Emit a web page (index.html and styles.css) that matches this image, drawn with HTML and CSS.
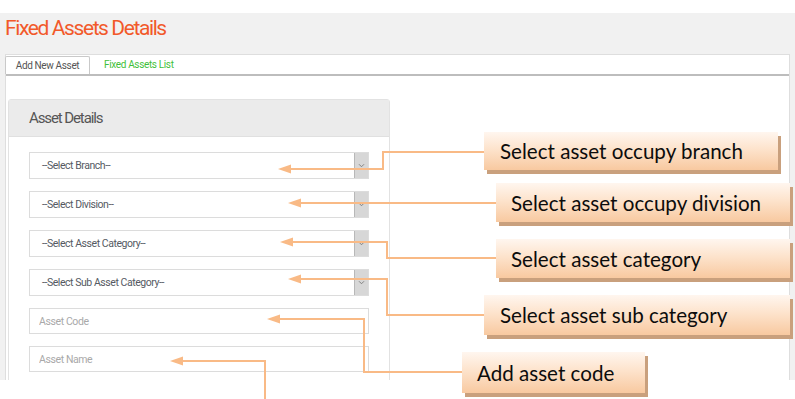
FILE: index.html
```html
<!DOCTYPE html>
<html lang="en">
<head>
<meta charset="utf-8">
<title>Fixed Assets Details</title>
<link rel="stylesheet" href="styles.css">
</head>
<body>
<div class="app">
  <div class="head"><h1 class="title">Fixed Assets Details</h1></div>
  <div class="card">
    <div class="tabs">
      <div class="tab active">Add New Asset</div>
      <div class="tab link">Fixed Assets List</div>
    </div>
    <div class="content">
      <div class="panel">
        <div class="panel-head">Asset Details</div>
        <div class="panel-body">
          <div class="select"><span class="sel-text">--Select Branch--</span><span class="sel-btn"><svg viewBox="0 0 8 6" width="7" height="5"><path d="M1 1.5 L4 4.5 L7 1.5" fill="none" stroke="#7a7a7a" stroke-width="1.1"/></svg></span></div>
          <div class="select"><span class="sel-text">--Select Division--</span><span class="sel-btn"><svg viewBox="0 0 8 6" width="7" height="5"><path d="M1 1.5 L4 4.5 L7 1.5" fill="none" stroke="#7a7a7a" stroke-width="1.1"/></svg></span></div>
          <div class="select"><span class="sel-text">--Select Asset Category--</span><span class="sel-btn"><svg viewBox="0 0 8 6" width="7" height="5"><path d="M1 1.5 L4 4.5 L7 1.5" fill="none" stroke="#7a7a7a" stroke-width="1.1"/></svg></span></div>
          <div class="select"><span class="sel-text">--Select Sub Asset Category--</span><span class="sel-btn"><svg viewBox="0 0 8 6" width="7" height="5"><path d="M1 1.5 L4 4.5 L7 1.5" fill="none" stroke="#7a7a7a" stroke-width="1.1"/></svg></span></div>
          <input class="field" type="text" placeholder="Asset Code">
          <input class="field" type="text" placeholder="Asset Name">
        </div>
      </div>
    </div>
  </div>
</div>

<div class="notes">
  <svg class="lines" width="795" height="399" viewBox="0 0 795 399">
    <g fill="none" stroke="#f9ba86" stroke-width="2">
      <polyline points="484,152 383,152 383,169 288,169"/>
      <polyline points="496,203 298,203"/>
      <polyline points="496,258 387,258 387,242 290,242"/>
      <polyline points="484,315 387,315 387,279 298,279"/>
      <polyline points="462,372 364,372 364,319 277,319"/>
      <polyline points="265,399 265,361 180,361"/>
    </g>
    <g fill="#f9ba86">
      <polygon points="278,169 291,164.5 291,173.5"/>
      <polygon points="288,203 301,198.5 301,207.5"/>
      <polygon points="280,242 293,237.5 293,246.5"/>
      <polygon points="288,279 301,274.5 301,283.5"/>
      <polygon points="267,319 280,314.5 280,323.5"/>
      <polygon points="170,361 183,356.5 183,365.5"/>
    </g>
  </svg>
  <div class="callout c1">Select asset occupy branch</div>
  <div class="callout c2">Select asset occupy division</div>
  <div class="callout c3">Select asset category</div>
  <div class="callout c4">Select asset sub category</div>
  <div class="callout c5">Add asset code</div>
</div>
</body>
</html>
```

FILE: styles.css
```css
* { box-sizing: border-box; }
html, body { margin: 0; padding: 0; }
body {
  width: 795px;
  height: 399px;
  overflow: hidden;
  background: #ffffff;
  font-family: Roboto, "Liberation Sans", sans-serif;
  position: relative;
}
.app {
  margin-top: 13px;
  height: 367px;
  background: #f1f1f1;
  overflow: hidden;
  display: flex;
  flex-direction: column;
}
.head {
  flex: none;
  height: 41px;
  padding-left: 5px;
}
.title {
  margin: 0;
  font-weight: 400;
  font-size: 21px;
  line-height: 30px;
  letter-spacing: -1.4px;
  color: #f2592a;
}
.card {
  flex: 1;
  min-height: 0;
  margin: 0 5px;
  background: #ffffff;
  border: 1px solid #dedede;
  border-bottom: none;
  display: flex;
  flex-direction: column;
}
.tabs {
  flex: none;
  height: 19px;
  display: flex;
  align-items: flex-end;
  border-bottom: 2px solid #bdbdbd;
  box-sizing: content-box;
}
.tab {
  font-size: 10px;
  letter-spacing: -0.35px;
  height: 18px;
  line-height: 17px;
}
.tab.active {
  width: 85px;
  margin-left: -1px;
  text-align: center;
  border: 1px solid #c9c9c9;
  border-bottom: none;
  border-radius: 2px 2px 0 0;
  color: #555555;
  background: #ffffff;
}
.tab.link {
  margin-left: 14px;
  color: #3fbf3a;
}
.content {
  flex: none;
  padding: 23px 0 0 2px;
}
.panel {
  width: 382px;
  border: 1px solid #e2e2e2;
  border-radius: 3px 3px 0 0;
  background: #ffffff;
}
.panel-head {
  height: 37px;
  background: #ebebeb;
  border-bottom: 1px solid #e0e0e0;
  padding-left: 20px;
  font-size: 15px;
  letter-spacing: -1.1px;
  line-height: 36px;
  color: #555555;
}
.panel-body {
  padding: 15px 20px 20px 20px;
  display: flex;
  flex-direction: column;
  gap: 12px;
}
.select {
  height: 27px;
  border: 1px solid #dcdcdc;
  display: flex;
  align-items: stretch;
  background: #ffffff;
}
.sel-text {
  flex: 1;
  padding-left: 12px;
  font-size: 10.5px;
  letter-spacing: -0.45px;
  line-height: 25px;
  color: #555a63;
}
.sel-btn {
  width: 14px;
  background: #d7d7d7;
  border-left: 1px solid #b8b8b8;
  display: flex;
  align-items: center;
  justify-content: center;
}
.field {
  height: 26px;
  border: 1px solid #dcdcdc;
  padding: 0 0 0 9px;
  margin: 0;
  font-family: Roboto, "Liberation Sans", sans-serif;
  font-size: 10.5px;
  letter-spacing: -0.4px;
  outline: none;
  background: #ffffff;
}
.field::placeholder { color: #a9a9a9; }

.notes {
  position: absolute;
  left: 0;
  top: 0;
  width: 795px;
  height: 399px;
  pointer-events: none;
}
.lines {
  position: absolute;
  left: 0;
  top: 0;
}
.callout {
  position: absolute;
  display: flex;
  align-items: center;
  font-family: Lato, "Open Sans", sans-serif;
  font-size: 20.6px;
  color: #0c0c0c;
  background: linear-gradient(to bottom, #fff6ef 0%, #fde3cc 45%, #f8c9a0 100%);
  box-shadow: 3px 4px 0 #c9a07d;
  white-space: nowrap;
}
.c1 { left: 484px; top: 132px; width: 294px; height: 38px; padding-left: 16px; }
.c2 { left: 496px; top: 183px; width: 294px; height: 39px; padding-left: 15px; }
.c3 { left: 496px; top: 239px; width: 294px; height: 39px; padding-left: 15px; }
.c4 { left: 484px; top: 295px; width: 306px; height: 40px; padding-left: 16px; }
.c5 { left: 462px; top: 352px; width: 183px; height: 41px; padding-left: 15px; }
```
